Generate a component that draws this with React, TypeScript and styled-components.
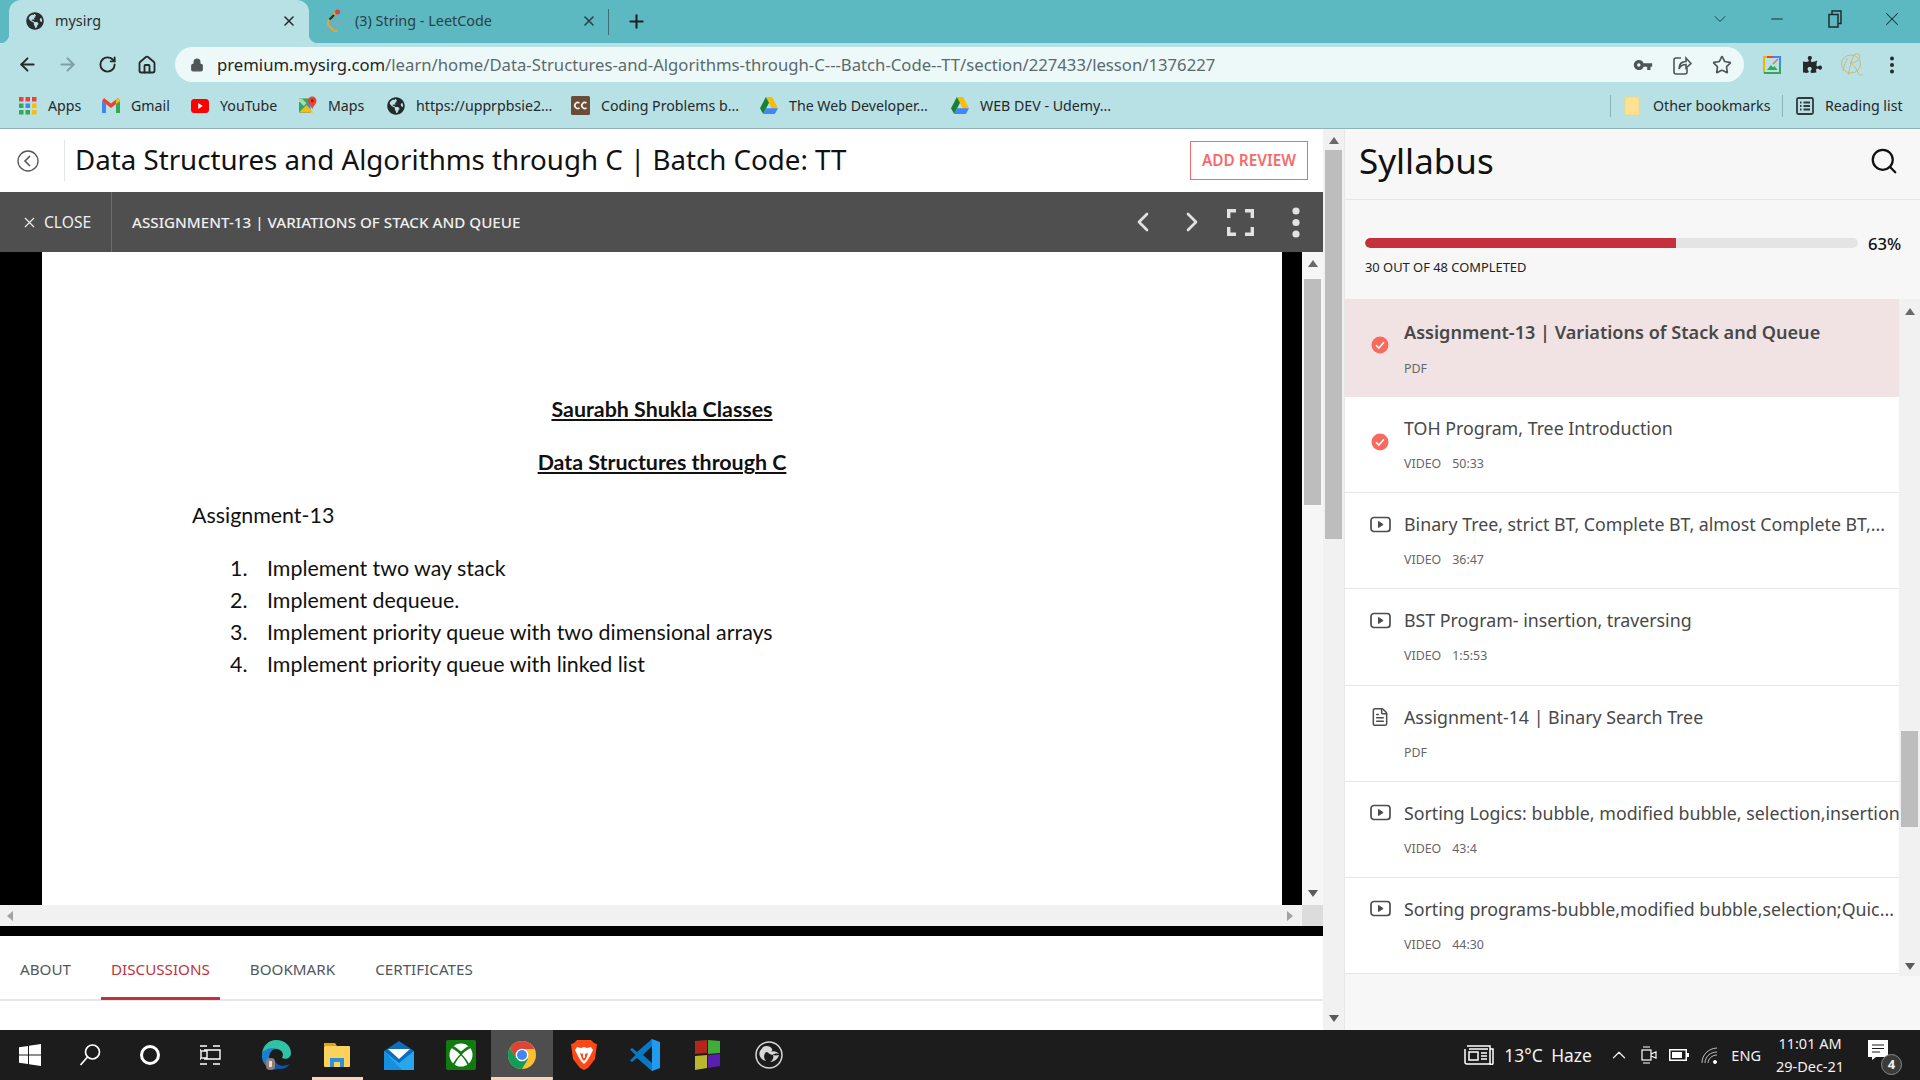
import styled, { createGlobalStyle } from "styled-components";
import { ArrowLeft, ArrowRight, RotateCw, House, Lock, Star, X, Plus, ChevronDown, Minus, ChevronLeft, ChevronRight, Search, FileText, ChevronUp } from "lucide-react";
import { FaPuzzlePiece, FaGlobeAmericas } from "react-icons/fa";
import { MdVpnKey } from "react-icons/md";

const Global = createGlobalStyle`
    * { box-sizing: border-box; }
    html, body { margin: 0; padding: 0; height: 100%; overflow: hidden; }
    body { font-family: "Noto Sans", "Open Sans", sans-serif; background: #fff; }
`;

const Screen = styled.div`
    width: 1920px;
    height: 1080px;
    display: flex;
    flex-direction: column;
    overflow: hidden;
`;

/* browser chrome */
const TabStrip = styled.div`
    height: 43px;
    flex: none;
    background: #5cb9c2;
    display: flex;
    align-items: stretch;
    padding-left: 9px;
    color: #202124;
`;

const Tab = styled.div<{ $active?: boolean; $w: number }>`
    position: relative;
    width: ${(p) => p.$w}px;
    padding-left: 17px;
    padding-right: 12px;
    padding-bottom: 2px;
    display: flex;
    align-items: center;
    gap: 11px;
    font-size: 14.4px;
    color: ${(p) => (p.$active ? "#2a2d30" : "#2b3f44")};
    background: ${(p) => (p.$active ? "#b8e1e5" : "transparent")};
    border-radius: 12px 12px 0 0;
    & > span { flex: 1; }
    ${(p) =>
        p.$active &&
        `&::before, &::after {
            content: "";
            position: absolute;
            bottom: 0;
            width: 9px;
            height: 9px;
            background: radial-gradient(circle at 0 0, transparent 9px, #b8e1e5 9.5px);
        }
        &::before { left: -9px; }
        &::after { right: -9px; transform: scaleX(-1); }`}
`;

const TabDivider = styled.div`
    width: 1px;
    height: 26px;
    background: #3b6f75;
    align-self: center;
    margin: 0 0 0 -1px;
`;

const NewTab = styled.div`
    width: 54px;
    display: flex;
    align-items: center;
    justify-content: center;
`;

const WindowButtons = styled.div`
    margin-left: auto;
    margin-right: -1px;
    display: flex;
    align-items: center;
    color: #1f2d30;
    padding-bottom: 6px;
`;

const WindowButton = styled.div`
    width: 57.5px;
    display: flex;
    justify-content: center;
`;

const Toolbar = styled.div`
    height: 43px;
    flex: none;
    background: #b8e1e5;
    display: flex;
    align-items: center;
    padding-left: 7px;
`;

const NavButton = styled.div<{ $off?: boolean }>`
    width: 40px;
    flex: none;
    display: flex;
    justify-content: center;
    color: ${(p) => (p.$off ? "#7e9ea3" : "#25292b")};
`;

const Address = styled.div`
    width: 1569px;
    height: 35px;
    margin-left: 8px;
    margin-right: 8px;
    flex: none;
    background: #edf9f9;
    border-radius: 18px;
    display: flex;
    align-items: center;
    padding-left: 15px;
    font-size: 16.7px;
    color: #5b6a6d;
    & b { font-weight: 400; color: #1f2426; }
`;

const Url = styled.span`
    margin-left: 13px;
    white-space: nowrap;
    flex: 1;
`;

const AddressIcon = styled.div`
    width: 39.5px;
    display: flex;
    justify-content: center;
    color: #4e5558;
    &:last-child { margin-right: 2px; }
`;

const BookmarkBar = styled.div`
    height: 43px;
    flex: none;
    background: #b8e1e5;
    border-bottom: 1px solid #8db3b7;
    display: flex;
    align-items: center;
    padding: 0 16px 3px 19px;
    font-size: 14.2px;
    color: #24292b;
`;

const Bookmark = styled.div<{ $w: number }>`
    width: ${(p) => p.$w}px;
    flex: none;
    display: flex;
    align-items: center;
    gap: 11px;
    white-space: nowrap;
    & > svg { flex: none; }
`;

const BookmarkRight = styled.div`
    margin-left: auto;
    display: flex;
    align-items: center;
    gap: 13px;
`;

const BookmarkSep = styled.div`
    width: 1px;
    height: 22px;
    background: #8db3b7;
`;

/* page */
const Content = styled.div`
    flex: 1;
    min-height: 0;
    display: flex;
`;

const Main = styled.main`
    width: 1323px;
    flex: none;
    display: flex;
    flex-direction: column;
    background: #fff;
`;

const CourseHeader = styled.header`
    height: 63px;
    flex: none;
    display: flex;
    align-items: center;
    color: #000;
`;

const BackSlot = styled.div`
    width: 65px;
    height: 41px;
    flex: none;
    display: flex;
    align-items: center;
    justify-content: center;
    border-right: 1px solid #e4e4e4;
    padding-right: 8px;
    color: #555;
`;

const CourseTitle = styled.h1`
    margin: 0 0 3px 10px;
    font-size: 27.7px;
    font-weight: 400;
    white-space: nowrap;
    color: #111;
`;

const ReviewButton = styled.button`
    margin-left: auto;
    margin-right: 15px;
    width: 118px;
    height: 39px;
    background: #fff;
    border: 1px solid #f56b6b;
    color: #f56b6b;
    font-family: inherit;
    font-size: 15.4px;
    font-weight: 600;
    padding: 0;
`;

const ViewerBar = styled.div`
    height: 60px;
    flex: none;
    background: #4f4f4f;
    display: flex;
    align-items: stretch;
    color: #f0f0f0;
    font-size: 15.2px;
`;

const CloseSlot = styled.div`
    width: 112px;
    flex: none;
    display: flex;
    align-items: center;
    gap: 6px;
    padding-left: 21px;
    font-size: 15.6px;
    border-right: 1px solid #6d6d6d;
`;

const LessonName = styled.div`
    display: flex;
    align-items: center;
    margin-left: 20px;
    font-weight: 500;
`;

const BarIcons = styled.div`
    margin-left: auto;
    margin-right: -3px;
    display: flex;
    align-items: center;
    color: #e2e2e2;
`;

const BarIcon = styled.div<{ $w: number }>`
    width: ${(p) => p.$w}px;
    display: flex;
    justify-content: center;
`;

const Viewer = styled.div`
    height: 653px;
    flex: none;
    display: flex;
`;

const BlackSide = styled.div<{ $w: number }>`
    width: ${(p) => p.$w}px;
    flex: none;
    background: #000;
`;

const PdfPage = styled.div`
    flex: 1;
    background: #fff;
    padding-top: 141px;
    color: #111;
    font-family: Lato, "Noto Sans", sans-serif;
    font-size: 21.4px;
    line-height: 32px;
`;

const PdfHeading = styled.div`
    text-align: center;
    font-weight: 700;
    text-decoration: underline;
    margin-bottom: 21px;
`;

const PdfLine = styled.div`
    margin-left: 150px;
    margin-bottom: 21px;
`;

const PdfList = styled.ol`
    list-style: none;
    margin: 0 0 0 188px;
    padding: 0;
`;

const PdfItem = styled.li`
    display: flex;
    & > span { width: 37px; flex: none; }
`;

const Track = styled.div<{ $pad: string; $bg: string }>`
    width: 21px;
    flex: none;
    display: flex;
    flex-direction: column;
    align-items: center;
    padding: ${(p) => p.$pad};
    background: ${(p) => p.$bg};
`;

const ArrowUp = styled.div`
    width: 0;
    height: 0;
    border-left: 5px solid transparent;
    border-right: 5px solid transparent;
    border-bottom: 7px solid #6a6a6a;
    flex: none;
`;

const ArrowDown = styled.div`
    width: 0;
    height: 0;
    margin-top: auto;
    border-left: 5px solid transparent;
    border-right: 5px solid transparent;
    border-top: 7px solid #5a5a5a;
    flex: none;
`;

const Thumb = styled.div<{ $gap: number; $h: number }>`
    width: 17px;
    flex: none;
    height: ${(p) => p.$h}px;
    margin-top: ${(p) => p.$gap}px;
    background: #bdbdbd;
`;

const HScroll = styled.div`
    height: 21px;
    flex: none;
    background: #f1f1f1;
    display: flex;
    align-items: center;
    padding-left: 7px;
`;

const ArrowLeftTip = styled.div`
    width: 0;
    height: 0;
    border-top: 5px solid transparent;
    border-bottom: 5px solid transparent;
    border-right: 6px solid #a3a3a3;
`;

const ArrowRightTip = styled.div`
    width: 0;
    height: 0;
    margin-left: auto;
    margin-right: 9px;
    border-top: 5px solid transparent;
    border-bottom: 5px solid transparent;
    border-left: 6px solid #a3a3a3;
`;

const Corner = styled.div`
    width: 21px;
    height: 21px;
    background: #dcdcdc;
`;

const BlackBand = styled.div`
    height: 10px;
    flex: none;
    background: #000;
`;

const LessonTabs = styled.nav`
    flex: none;
    height: 65px;
    padding-left: 10px;
    display: flex;
    gap: 20px;
    align-items: stretch;
    font-size: 15.2px;
    color: #50585e;
    border-bottom: 2px solid #e6e6e6;
`;

const TabsWrap = styled.div`
    height: 94px;
    flex: none;
    display: flex;
    flex-direction: column;
`;

const LessonTab = styled.div<{ $active?: boolean }>`
    padding: 5px 10px 0;
    display: flex;
    align-items: center;
    margin-bottom: -1px;
    color: ${(p) => (p.$active ? "#c2323e" : "inherit")};
    border-bottom: 3px solid ${(p) => (p.$active ? "#c2323e" : "transparent")};
`;

/* syllabus */
const Sidebar = styled.aside`
    flex: 1;
    background: #f7f7f7;
    border-left: 1px solid #e8e8e8;
    display: flex;
    flex-direction: column;
    min-width: 0;
`;

const SideHead = styled.div`
    height: 71px;
    flex: none;
    display: flex;
    align-items: center;
    justify-content: space-between;
    padding: 0 21px 7px 14px;
    border-bottom: 1px solid #e6e6e6;
    font-size: 35px;
    font-weight: 400;
    color: #111;
`;

const Progress = styled.div`
    height: 99px;
    flex: none;
    padding: 38px 0 0 20px;
`;

const BarRow = styled.div`
    display: flex;
    align-items: center;
    gap: 10px;
    height: 10px;
    font-size: 16.7px;
    font-weight: 500;
    color: #111;
`;

const BarBack = styled.div`
    width: 493px;
    height: 10px;
    flex: none;
    border-radius: 5px;
    background: #e4e4e4;
    overflow: hidden;
`;

const BarFill = styled.div`
    height: 100%;
    background: #c4313d;
    border-radius: 5px 0 0 5px;
`;

const Completed = styled.div`
    margin-top: 10px;
    font-size: 12.9px;
    line-height: 18px;
    color: #222;
`;

const ListArea = styled.div`
    display: flex;
    height: 677px;
    flex: none;
`;

const LessonList = styled.div`
    flex: 1;
    min-width: 0;
`;

const Row = styled.div<{ $active?: boolean }>`
    height: ${(p) => (p.$active ? 98 : 96.2)}px;
    display: flex;
    padding-top: ${(p) => (p.$active ? 20 : 19)}px;
    background: ${(p) => (p.$active ? "#f1e3e4" : "#fff")};
    border-bottom: ${(p) => (p.$active ? "none" : "1px solid #e6e6e6")};
    color: #4a4a4a;
`;

const RowIcon = styled.div<{ $check?: boolean }>`
    width: 59px;
    flex: none;
    display: flex;
    justify-content: center;
    padding-left: 11px;
    height: 24px;
    align-items: center;
    color: #4d4d4d;
    margin-top: ${(p) => (p.$check ? 14 : 0)}px;
`;

const RowBody = styled.div`
    flex: 1;
    min-width: 0;
`;

const RowTitle = styled.div<{ $active?: boolean }>`
    font-size: ${(p) => (p.$active ? 18.1 : 17.8)}px;
    line-height: ${(p) => (p.$active ? 26 : 24)}px;
    white-space: nowrap;
    overflow: hidden;
    font-weight: ${(p) => (p.$active ? 600 : 400)};
    color: #484848;
`;

const RowMeta = styled.div`
    margin-top: 16px;
    font-size: 12.4px;
    line-height: 16px;
    color: #666;
    display: flex;
    gap: 11px;
`;

/* taskbar */
const Taskbar = styled.footer`
    height: 50px;
    flex: none;
    background: #1d1c1c;
    display: flex;
    align-items: stretch;
    color: #f2f2f2;
`;

const SysSlot = styled.div`
    width: 60px;
    flex: none;
    display: flex;
    align-items: center;
    justify-content: center;
`;

const Apps = styled.div`
    margin-left: 5px;
    display: flex;
`;

const AppSlot = styled.div<{ $current?: boolean; $mark?: number }>`
    width: 61.6px;
    flex: none;
    display: flex;
    align-items: center;
    justify-content: center;
    background-color: ${(p) => (p.$current ? "#4e4e4e" : "transparent")};
    background-image: ${(p) => (p.$mark ? "linear-gradient(#fcd3b4, #fcd3b4)" : "none")};
    background-repeat: no-repeat;
    background-position: center bottom;
    background-size: ${(p) => p.$mark ?? 0}px 3px;
`;

const Tray = styled.div`
    margin-left: auto;
    display: flex;
    align-items: center;
    font-size: 17.4px;
    padding-right: 20px;
`;

const Weather = styled.span`
    margin-left: 10px;
    word-spacing: 4px;
    white-space: nowrap;
    width: 100px;
`;

const TrayIcon = styled.div`
    width: 30px;
    flex: none;
    display: flex;
    justify-content: center;
`;

const Lang = styled.span`
    font-size: 14.5px;
    margin-left: 7px;
`;

const Clock = styled.div`
    width: 80px;
    margin-left: 9px;
    text-align: center;
    font-size: 14.5px;
    line-height: 23px;
`;

const Notify = styled.div`
    position: relative;
    margin-left: 18px;
    width: 32px;
    height: 30px;
    display: flex;
`;

const Badge = styled.span`
    position: absolute;
    right: -2px;
    bottom: -5px;
    width: 21px;
    height: 21px;
    border-radius: 50%;
    background: #3a3a3a;
    border: 1px solid #8a8a8a;
    font-size: 13px;
    font-weight: 700;
    line-height: 19px;
    text-align: center;
`;

/* drawings */
const CheckDot = () => (
    <svg width="18" height="18" viewBox="0 0 18 18">
        <circle cx="9" cy="9" r="8.5" fill="#f96a5e" />
        <path d="M5 9.2l2.8 2.8L13 6.2" fill="none" stroke="#fff" strokeWidth="1.6" />
    </svg>
);

const VideoIcon = () => (
    <svg width="21" height="17" viewBox="0 0 21 17" fill="none" stroke="#4d4d4d" strokeWidth="1.7">
        <rect x="1" y="1.5" width="19" height="14" rx="3" />
        <path d="M8.5 5.5v6l4.6-3z" fill="#4d4d4d" strokeWidth="1" />
    </svg>
);

const Fullscreen = () => (
    <svg width="27" height="27" viewBox="0 0 27 27" fill="none" stroke="#e2e2e2" strokeWidth="3.4">
        <path d="M1.7 9V1.7H9M18 1.7h7.3V9M25.3 18v7.3H18M9 25.3H1.7V18" />
    </svg>
);

const VDots = () => (
    <svg width="8" height="31" viewBox="0 0 8 31" fill="#e2e2e2">
        <circle cx="4" cy="4" r="3.6" />
        <circle cx="4" cy="15.5" r="3.6" />
        <circle cx="4" cy="27" r="3.6" />
    </svg>
);

const LeetCode = () => (
    <svg width="18" height="26" viewBox="0 0 18 26" fill="none">
        <path d="M11 3L3 12c-1.500 2-1.500 4 0 6l4 4c1.500 1.500 3 1.500 4.500.5" stroke="#e6a33a" strokeWidth="2" />
        <path d="M8 15h8" stroke="#9aa0a0" strokeWidth="1.800" />
        <circle cx="11.500" cy="4" r="2.500" fill="#d8453f" />
        <path d="M3.500 11.500L8 7" stroke="#2b2b2b" strokeWidth="2.200" />
    </svg>
);

const Restore = () => (
    <svg width="14" height="18" viewBox="0 0 14 18" fill="none" stroke="#1f2d30" strokeWidth="1.500">
        <rect x="1" y="4.500" width="9" height="12.500" />
        <path d="M4 4.500V1h9v12.500h-3" />
    </svg>
);

const ShareBox = () => (
    <svg width="19" height="20" viewBox="0 0 19 20" fill="none" stroke="#4e5558" strokeWidth="1.600">
        <path d="M8 3H3a2 2 0 0 0-2 2v12a2 2 0 0 0 2 2h9a2 2 0 0 0 2-2v-4" />
        <path d="M6 14c0-5 3-7.500 7-7.500V3l5 5.500L13 13V9.500c-3 0-5.500 1-7 4.500z" />
    </svg>
);

const ExtensionIcon = () => (
    <svg width="18" height="18" viewBox="0 0 18 18" fill="none" strokeWidth="2">
        <path d="M1 17V1h8" stroke="#f4b400" />
        <path d="M9 1h8v8" stroke="#4285f4" />
        <path d="M1 17h16V9" stroke="#34a853" />
        <path d="M4 1h6" stroke="#ea4335" />
        <path d="M4 14l4-5 2 2.500 1.500-1.500 3 4z" fill="#34a853" stroke="none" />
        <path d="M10 8l5-5" stroke="#ea6a5e" strokeWidth="1.500" />
    </svg>
);

const Avatar = () => (
    <svg width="24" height="26" viewBox="0 0 24 26" fill="none" stroke="#c9b878" strokeWidth="1">
        <ellipse cx="11" cy="12" rx="9.500" ry="9" />
        <path d="M8 23C10 16 11 8 14 3c3-3 8 0 5 4-2 3-6 4-9 4 4 1 6 6 9 11 1 2 3 1 4 0" />
        <path d="M3 19c1-6 3-10 5-13" />
    </svg>
);

const KebabSmall = () => (
    <svg width="6" height="18" viewBox="0 0 6 18" fill="#25292b">
        <circle cx="3" cy="2.500" r="2" />
        <circle cx="3" cy="9" r="2" />
        <circle cx="3" cy="15.500" r="2" />
    </svg>
);

const AppsIcon = () => (
    <svg width="18" height="18" viewBox="0 0 18 18">
        {["#ea4335", "#ea4335", "#ea4335", "#34a853", "#4285f4", "#fbbc04", "#34a853", "#34a853", "#fbbc04"].map((c, i) => (
            <rect key={i} x={(i % 3) * 6.500} y={Math.floor(i / 3) * 6.500} width="4.500" height="4.500" fill={c} />
        ))}
    </svg>
);

const GmailIcon = () => (
    <svg width="18" height="15" viewBox="0 0 18 15">
        <path d="M0 3v12h4V6z" fill="#4285f4" />
        <path d="M14 6v9h4V3z" fill="#34a853" />
        <path d="M0 3l9 7 9-7-2-3-7 5.500L2 0z" fill="#ea4335" />
        <path d="M14 6l4-3-2-3-2 1.500z" fill="#fbbc04" />
    </svg>
);

const YoutubeIcon = () => (
    <svg width="18" height="14" viewBox="0 0 20 14" preserveAspectRatio="none">
        <rect width="20" height="14" rx="3.500" fill="#f00" />
        <path d="M8 4v6l5-3z" fill="#fff" />
    </svg>
);

const MapsIcon = () => (
    <svg width="18" height="19" viewBox="0 0 19 19">
        <path d="M0 2h12v15H0z" fill="#34a853" />
        <path d="M0 17L12 5v12z" fill="#4285f4" />
        <path d="M0 17l8-8 7 8z" fill="#fbbc04" />
        <path d="M3 2l5 5-3 3-5-5V2z" fill="#a8dab5" />
        <path d="M14 0a4.500 4.500 0 0 1 4.500 4.500C18.500 8 14 11 14 14c0-3-4.500-6-4.500-9.500A4.500 4.500 0 0 1 14 0z" fill="#ea4335" />
        <circle cx="14" cy="4.500" r="1.500" fill="#8c1d18" />
    </svg>
);

const CcIcon = () => (
    <svg width="19" height="19" viewBox="0 0 19 19">
        <rect width="19" height="19" rx="1.500" fill="#6b4c38" />
        <path d="M8.500 7a3 3 0 1 0 0 5M15.500 7a3 3 0 1 0 0 5" fill="none" stroke="#f3ece5" strokeWidth="1.800" />
    </svg>
);

const DriveIcon = () => (
    <svg width="18" height="17" viewBox="0 0 20 18" preserveAspectRatio="none">
        <path d="M6.500 0h7L20 12h-7z" fill="#fbbc04" />
        <path d="M6.500 0L0 12l3.500 6L10 6z" fill="#188038" />
        <path d="M3.500 18h13L20 12H7z" fill="#4285f4" />
    </svg>
);

const FolderIcon = () => (
    <svg width="18" height="20" viewBox="0 0 18 20">
        <rect x="1" y="1" width="14" height="18" rx="1.500" fill="#fde293" stroke="#f7d774" />
    </svg>
);

const ReadingIcon = () => (
    <svg width="18" height="18" viewBox="0 0 18 18" fill="none" stroke="#33393b" strokeWidth="1.800">
        <rect x="1" y="1" width="16" height="16" rx="1.500" />
        <path d="M4 5.500h1.500M7.500 5.500H14M4 9h1.500M7.500 9H14M4 12.500h1.500M7.500 12.500H14" />
    </svg>
);

const WinLogo = () => (
    <svg width="22" height="22" viewBox="0 0 22 22" fill="#fff">
        <path d="M0 3.200l9-1.300v8.500H0zM10 1.800L22 0v10.400H10zM0 11.600h9v8.500l-9-1.300zM10 11.600h12V22l-12-1.800z" />
    </svg>
);

const SearchGlass = () => (
    <svg width="24" height="24" viewBox="0 0 24 24" fill="none" stroke="#fff" strokeWidth="1.700">
        <circle cx="14.500" cy="9" r="7" />
        <path d="M9.500 14L2.500 22" />
    </svg>
);

const Ring = () => (
    <svg width="22" height="22" viewBox="0 0 22 22" fill="none" stroke="#fff" strokeWidth="3">
        <circle cx="11" cy="11" r="8.500" />
    </svg>
);

const TaskView = () => (
    <svg width="21" height="20" viewBox="0 0 21 20" fill="none" stroke="#fff" strokeWidth="1.400">
        <path d="M0 1h7M13 1h7M4 5h16v9H4M0 5h1M0 14h1M0 19h7M13 19h7" />
        <rect x="1" y="6" width="6" height="7" />
    </svg>
);

const EdgeIcon = () => (
    <svg width="32" height="32" viewBox="0 0 32 32">
        <path d="M2 15C3 6 9 1 16 1c9 0 15 6 15 13 0 5-5 7-9 5 2-3 1-8-5-9C10 9 4 11 2 15z" fill="#2fc3a5" />
        <path d="M2 15C4 10 11 8 15 10c-4 1-6 5-6 9 0 5 3 10 9 11-9 2-17-5-16-15z" fill="#1b7fd1" />
        <path d="M9 19c0 6 5 11 11 11 4 0 8-2 10-5-6 3-13 2-15-3z" fill="#0c59a4" />
        <rect x="6" y="19" width="9" height="12" rx="4" fill="#8e7f7f" />
        <rect x="9" y="22" width="3" height="6" fill="#e8dcd8" />
    </svg>
);

const ExplorerIcon = () => (
    <svg width="28" height="26" viewBox="0 0 28 26">
        <path d="M1 1h11l2 3H1z" fill="#e5a50a" />
        <rect x="1" y="4" width="26" height="21" rx="1" fill="#fbd35c" />
        <path d="M7 25v-9h14v9h-4v-5h-6v5z" fill="#2f8fd8" />
    </svg>
);

const MailIcon = () => (
    <svg width="30" height="30" viewBox="0 0 30 30">
        <path d="M15 1l15 10v19H0V11z" fill="#0f6cbd" />
        <path d="M4 9h22L15 19z" fill="#fff" />
        <path d="M0 11l15 12 15-12v19H0z" fill="#28a8ea" />
        <path d="M0 11l18 19H0z" fill="#1490df" />
    </svg>
);

const XboxIcon = () => (
    <svg width="30" height="30" viewBox="0 0 30 30">
        <rect width="30" height="30" rx="2" fill="#107c10" />
        <circle cx="15" cy="15" r="11.500" fill="#fff" />
        <path d="M15 11.500C12 9 9 6.500 7 6L5 8c3 1 7.500 4.500 9 6.500-4 4-7.500 9-8 12l1.500 1.500c1-4 4-9 7.500-12.500 3.500 3.500 6.500 8.500 7.500 12.500l1.500-1.500c-.5-3-4-8-8-12 1.500-2 6-5.500 9-6.500l-2-2c-2 .5-5 3-8 5.500z" fill="#107c10" />
    </svg>
);

const ChromeIcon = () => (
    <svg width="28" height="28" viewBox="0 0 28 28">
        <circle cx="14" cy="14" r="14" fill="#fbc02d" />
        <path d="M14 0a14 14 0 0 0-12 6.900L8 17l6-9h12.200A14 14 0 0 0 14 0z" fill="#db4437" />
        <path d="M2 6.900A14 14 0 0 0 14 28l6-10-12-1z" fill="#0f9d58" />
        <circle cx="14" cy="14" r="6.300" fill="#fff" />
        <circle cx="14" cy="14" r="5" fill="#4285f4" />
    </svg>
);

const BraveIcon = () => (
    <svg width="26" height="30" viewBox="0 0 26 30">
        <path d="M6 0h14l3 3 3 1-2 15-7 9-4 2-4-2-7-9L0 4l3-1z" fill="#fb4a16" />
        <path d="M6 7l4 1 3-1 3 1 4-1 2 3-3 6-3 5-3 3-3-3-3-5-3-6z" fill="#fff" />
        <path d="M9 13l3 1v4h2v-4l3-1-2 6-2 2-2-2z" fill="#fb4a16" />
    </svg>
);

const VsCodeIcon = () => (
    <svg width="30" height="32" viewBox="0 0 30 32">
        <path d="M22 0l8 3v26l-8 3L6 17l16-10v17L9 16z" fill="#1f9cf0" />
        <path d="M22 0L7 13 2 9 0 10.500 5.500 16 0 21.500 2 23l5-4 15 13z" fill="#0a78c2" />
        <path d="M22 7v17l-9-8z" fill="#1d1c1c" />
    </svg>
);

const MultiIcon = () => (
    <svg width="26" height="32" viewBox="0 0 26 32">
        <path d="M1 2l12-1v13L1 15z" fill="#b3261c" />
        <path d="M14 1l12 1v12l-12 1z" fill="#3fae36" />
        <path d="M1 17l12-1v13L1 31z" fill="#b9b82c" />
        <path d="M14 16l12-1v12l-12 2z" fill="#5a1fb0" />
    </svg>
);

const ObsIcon = () => (
    <svg width="28" height="28" viewBox="0 0 28 28" fill="none">
        <circle cx="14" cy="14" r="13" stroke="#d8d8d8" strokeWidth="1.500" />
        <path d="M8 6c3-2 8-1 9 2s-3 4-6 3c-2 2-3 6 0 9-5-1-8-6-6-10z M24 14c-1 4-5 7-9 7 3-1 4-5 3-7 3 1 4 0 6 0z M13 12c3-2 8-3 11 1-3-1-5 0-7 1z" fill="#d8d8d8" />
    </svg>
);

const NewsIcon = () => (
    <svg width="30" height="20" viewBox="0 0 30 20" fill="none" stroke="#fff" strokeWidth="1.500">
        <path d="M3 1h23v18H3a2 2 0 0 1-2-2V4" />
        <path d="M26 4h3v14a1.500 1.500 0 0 1-3 0" />
        <rect x="5" y="7" width="9" height="8" />
        <path d="M5 4h19M17 8h6M17 11h6M17 14h6" />
    </svg>
);

const CameraTray = () => (
    <svg width="16" height="20" viewBox="0 0 16 20" fill="none" stroke="#fff" strokeWidth="1.200">
        <rect x="1" y="5" width="9" height="10" />
        <path d="M10 9l5-2v6l-5-2M2 2h7M2 18h7" />
    </svg>
);

const BatteryTray = () => (
    <svg width="20" height="12" viewBox="0 0 20 12">
        <rect x=".75" y=".75" width="16.500" height="10.500" fill="none" stroke="#fff" strokeWidth="1.500" />
        <rect x="3" y="3" width="10" height="6" fill="#fff" />
        <rect x="18" y="4" width="2" height="4" fill="#fff" />
    </svg>
);

const WifiTray = () => (
    <svg width="17" height="17" viewBox="0 0 17 17" fill="none" stroke="#fff" strokeWidth="1">
        <path d="M1 16C1 8 7 1.500 16 1M4 16c0-6 5-11 12-11M7 16c0-4 4-8 9-8" opacity=".7" />
        <circle cx="14" cy="15" r="1.500" fill="#fff" />
    </svg>
);

const NotifyIcon = () => (
    <svg width="20" height="20" viewBox="0 0 20 20">
        <path d="M0 0h20v17H8l-4 3v-3H0z" fill="#fff" />
        <path d="M4 5h12M4 8.500h12M4 12h8" stroke="#1d1c1c" strokeWidth="1.200" />
    </svg>
);

const lessons = [
    { title: "Assignment-13 | Variations of Stack and Queue", kind: "PDF", time: "", done: true, active: true },
    { title: "TOH Program, Tree Introduction", kind: "VIDEO", time: "50:33", done: true },
    { title: "Binary Tree, strict BT, Complete BT, almost Complete BT,...", kind: "VIDEO", time: "36:47" },
    { title: "BST Program- insertion, traversing", kind: "VIDEO", time: "1:5:53" },
    { title: "Assignment-14 | Binary Search Tree", kind: "PDF", time: "" },
    { title: "Sorting Logics: bubble, modified bubble, selection,insertion", kind: "VIDEO", time: "43:4" },
    { title: "Sorting programs-bubble,modified bubble,selection;Quic...", kind: "VIDEO", time: "44:30" },
];

const assignments = [
    "Implement two way stack",
    "Implement dequeue.",
    "Implement priority queue with two dimensional arrays",
    "Implement priority queue with linked list",
];

export default function App() {
    return (
        <Screen>
            <Global />
            <TabStrip>
                <Tab $active $w={300}>
                    <FaGlobeAmericas size={18} />
                    <span>mysirg</span>
                    <X size={16} strokeWidth={2.4} />
                </Tab>
                <Tab $w={300}>
                    <LeetCode />
                    <span>(3) String - LeetCode</span>
                    <X size={16} strokeWidth={2.4} />
                </Tab>
                <TabDivider />
                <NewTab>
                    <Plus size={21} strokeWidth={2.4} color="#202124" />
                </NewTab>
                <WindowButtons>
                    <WindowButton><ChevronDown size={20} strokeWidth={1} /></WindowButton>
                    <WindowButton><Minus size={18} strokeWidth={1.6} /></WindowButton>
                    <WindowButton><Restore /></WindowButton>
                    <WindowButton><X size={22} strokeWidth={1.1} /></WindowButton>
                </WindowButtons>
            </TabStrip>
            <Toolbar>
                <NavButton><ArrowLeft size={21} strokeWidth={2.2} /></NavButton>
                <NavButton $off><ArrowRight size={21} strokeWidth={2.2} /></NavButton>
                <NavButton><RotateCw size={19} strokeWidth={2.4} /></NavButton>
                <NavButton><House size={20} strokeWidth={2.2} /></NavButton>
                <Address>
                    <Lock size={14} fill="#4e5558" color="#4e5558" />
                    <Url><b>premium.mysirg.com</b>/learn/home/Data-Structures-and-Algorithms-through-C---Batch-Code--TT/section/227433/lesson/1376227</Url>
                    <AddressIcon><MdVpnKey size={20} /></AddressIcon>
                    <AddressIcon><ShareBox /></AddressIcon>
                    <AddressIcon><Star size={20} strokeWidth={2} /></AddressIcon>
                </Address>
                <NavButton><ExtensionIcon /></NavButton>
                <NavButton><FaPuzzlePiece size={19} /></NavButton>
                <NavButton><Avatar /></NavButton>
                <NavButton><KebabSmall /></NavButton>
            </Toolbar>
            <BookmarkBar>
                <Bookmark $w={83}><AppsIcon />Apps</Bookmark>
                <Bookmark $w={89}><GmailIcon />Gmail</Bookmark>
                <Bookmark $w={108}><YoutubeIcon />YouTube</Bookmark>
                <Bookmark $w={88}><MapsIcon />Maps</Bookmark>
                <Bookmark $w={184}><FaGlobeAmericas size={18} />https://upprpbsie2...</Bookmark>
                <Bookmark $w={189}><CcIcon />Coding Problems b...</Bookmark>
                <Bookmark $w={191}><DriveIcon />The Web Developer...</Bookmark>
                <Bookmark $w={180}><DriveIcon />WEB DEV - Udemy...</Bookmark>
                <BookmarkRight>
                    <BookmarkSep />
                    <Bookmark $w={145}><FolderIcon />Other bookmarks</Bookmark>
                    <BookmarkSep />
                    <Bookmark $w={108}><ReadingIcon />Reading list</Bookmark>
                </BookmarkRight>
            </BookmarkBar>
            <Content>
                <Main>
                    <CourseHeader>
                        <BackSlot>
                            <svg width="22" height="22" viewBox="0 0 22 22" fill="none" stroke="#555" strokeWidth="1.300">
                                <circle cx="11" cy="11" r="10" />
                                <path d="M13 6l-5 5 5 5" strokeWidth="1.600" />
                            </svg>
                        </BackSlot>
                        <CourseTitle>Data Structures and Algorithms through C | Batch Code: TT</CourseTitle>
                        <ReviewButton>ADD REVIEW</ReviewButton>
                    </CourseHeader>
                    <ViewerBar>
                        <CloseSlot><X size={17} strokeWidth={1.6} />CLOSE</CloseSlot>
                        <LessonName>ASSIGNMENT-13 | VARIATIONS OF STACK AND QUEUE</LessonName>
                        <BarIcons>
                            <BarIcon $w={49}><ChevronLeft size={32} strokeWidth={2} /></BarIcon>
                            <BarIcon $w={49}><ChevronRight size={32} strokeWidth={2} /></BarIcon>
                            <BarIcon $w={49}><Fullscreen /></BarIcon>
                            <BarIcon $w={61}><VDots /></BarIcon>
                        </BarIcons>
                    </ViewerBar>
                    <Viewer>
                        <BlackSide $w={42} />
                        <PdfPage>
                            <PdfHeading>Saurabh Shukla Classes</PdfHeading>
                            <PdfHeading>Data Structures through C</PdfHeading>
                            <PdfLine>Assignment-13</PdfLine>
                            <PdfList>
                                {assignments.map((text, i) => (
                                    <PdfItem key={text}><span>{i + 1}.</span>{text}</PdfItem>
                                ))}
                            </PdfList>
                        </PdfPage>
                        <BlackSide $w={20} />
                        <Track $pad="8px 0" $bg="#f6f6f6">
                            <ArrowUp />
                            <Thumb $gap={12} $h={226} />
                            <ArrowDown />
                        </Track>
                    </Viewer>
                    <HScroll>
                        <ArrowLeftTip />
                        <ArrowRightTip />
                        <Corner />
                    </HScroll>
                    <BlackBand />
                    <TabsWrap>
                        <LessonTabs>
                            <LessonTab>ABOUT</LessonTab>
                            <LessonTab $active>DISCUSSIONS</LessonTab>
                            <LessonTab>BOOKMARK</LessonTab>
                            <LessonTab>CERTIFICATES</LessonTab>
                        </LessonTabs>
                    </TabsWrap>
                </Main>
                <Track $pad="8px 0" $bg="#f1f1f1">
                    <ArrowUp />
                    <Thumb $gap={6} $h={389} />
                    <ArrowDown />
                </Track>
                <Sidebar>
                    <SideHead>
                        Syllabus
                        <Search size={30} strokeWidth={1.8} color="#111" />
                    </SideHead>
                    <Progress>
                        <BarRow>
                            <BarBack><BarFill style={{ width: "63%" }} /></BarBack>
                            63%
                        </BarRow>
                        <Completed>30 OUT OF 48 COMPLETED</Completed>
                    </Progress>
                    <ListArea>
                        <LessonList>
                            {lessons.map((l) => (
                                <Row key={l.title} $active={l.active}>
                                    <RowIcon $check={l.done}>
                                        {l.done ? <CheckDot /> : l.kind === "PDF" ? <FileText size={20} strokeWidth={1.8} /> : <VideoIcon />}
                                    </RowIcon>
                                    <RowBody>
                                        <RowTitle $active={l.active}>{l.title}</RowTitle>
                                        <RowMeta>
                                            <span>{l.kind}</span>
                                            {l.time && <span>{l.time}</span>}
                                        </RowMeta>
                                    </RowBody>
                                </Row>
                            ))}
                        </LessonList>
                        <Track $pad="9px 0 6px" $bg="#f1f1f1">
                            <ArrowUp />
                            <Thumb $gap={416} $h={96} />
                            <ArrowDown />
                        </Track>
                    </ListArea>
                </Sidebar>
            </Content>
            <Taskbar>
                <SysSlot><WinLogo /></SysSlot>
                <SysSlot><SearchGlass /></SysSlot>
                <SysSlot><Ring /></SysSlot>
                <SysSlot><TaskView /></SysSlot>
                <Apps>
                    <AppSlot><EdgeIcon /></AppSlot>
                    <AppSlot $mark={51}><ExplorerIcon /></AppSlot>
                    <AppSlot><MailIcon /></AppSlot>
                    <AppSlot><XboxIcon /></AppSlot>
                    <AppSlot $current $mark={62}><ChromeIcon /></AppSlot>
                    <AppSlot><BraveIcon /></AppSlot>
                    <AppSlot><VsCodeIcon /></AppSlot>
                    <AppSlot><MultiIcon /></AppSlot>
                    <AppSlot><ObsIcon /></AppSlot>
                </Apps>
                <Tray>
                    <NewsIcon />
                    <Weather>13°C Haze</Weather>
                    <TrayIcon><ChevronUp size={22} strokeWidth={1.3} /></TrayIcon>
                    <TrayIcon><CameraTray /></TrayIcon>
                    <TrayIcon><BatteryTray /></TrayIcon>
                    <TrayIcon><WifiTray /></TrayIcon>
                    <Lang>ENG</Lang>
                    <Clock>11:01 AM<br />29-Dec-21</Clock>
                    <Notify>
                        <NotifyIcon />
                        <Badge>4</Badge>
                    </Notify>
                </Tray>
            </Taskbar>
        </Screen>
    );
}
